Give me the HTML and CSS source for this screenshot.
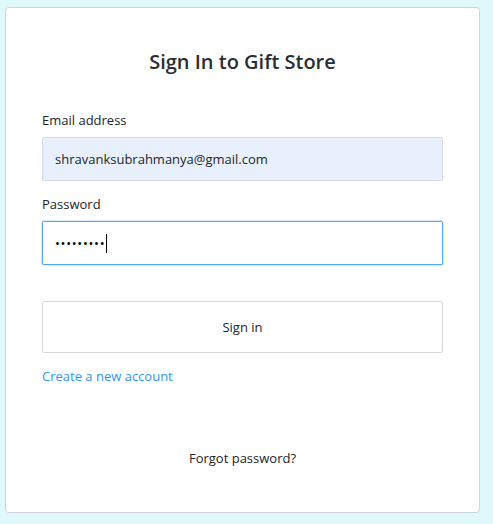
FILE: index.html
```html
<!DOCTYPE html>
<html lang="en">
<head>
<meta charset="utf-8">
<title>Sign In to Gift Store</title>
<link rel="stylesheet" href="styles.css">
</head>
<body>
<main class="card">
  <h1 class="title">Sign In to Gift Store</h1>
  <form class="form">
    <label class="label" for="email">Email address</label>
    <input class="field field-filled" id="email" type="email" value="shravanksubrahmanya@gmail.com">
    <label class="label label-pass">Password</label>
    <div class="field field-focus" role="textbox"><span class="dots">•••••••••</span><span class="caret"></span></div>
    <button class="btn" type="button">Sign in</button>
  </form>
  <a class="link" href="#">Create a new account</a>
  <a class="forgot" href="#">Forgot password?</a>
</main>
</body>
</html>
```
FILE: styles.css
```css
html, body {
  margin: 0;
  padding: 0;
}
body {
  background: #dff9fb;
  padding: 7px 14px 11px 5px;
  font-family: "Open Sans", "Noto Sans", sans-serif;
  color: #212529;
  font-size: 13px;
}
.card {
  box-sizing: border-box;
  width: 475px;
  height: 506px;
  background: #fff;
  border: 1px solid #cfd4d8;
  border-radius: 4px;
  padding: 40px 36px 0 36px;
  display: flex;
  flex-direction: column;
}
.title {
  margin: 0;
  font-size: 20px;
  line-height: 28px;
  font-weight: 600;
  text-align: center;
  color: #2a2e33;
}
.form {
  display: flex;
  flex-direction: column;
  margin: 34px 0 0 0;
}
.label {
  line-height: 20px;
  font-size: 13px;
}
.label-pass {
  margin-top: 13px;
}
.field {
  box-sizing: border-box;
  width: 401px;
  height: 44px;
  margin-top: 7px;
  border: 1px solid #ced4da;
  border-radius: 2px;
  padding: 0 12px;
  font-family: inherit;
  font-size: 13px;
  color: #212529;
  background: #fff;
  display: flex;
  align-items: center;
  outline: none;
}
.field-filled {
  background: #e8f0fe;
  border-color: #d6dbe0;
}
.field-focus {
  border-color: #4dabf7;
  box-shadow: 0 0 0 1px rgba(77, 171, 247, 0.25);
}
.dots {
  letter-spacing: 0.7px;
  font-size: 13px;
  color: #000;
}
.caret {
  display: inline-block;
  width: 1px;
  height: 19px;
  background: #000;
  margin-left: 1px;
}
.btn {
  box-sizing: border-box;
  width: 401px;
  height: 52px;
  margin-top: 36px;
  background: #fff;
  border: 1px solid #d6d9dc;
  border-radius: 2px;
  font-family: inherit;
  font-size: 13px;
  color: #212529;
  cursor: pointer;
}
.link {
  margin-top: 13px;
  line-height: 20px;
  color: #2f95f5;
  text-decoration: none;
  align-self: flex-start;
}
.forgot {
  margin-top: 62px;
  line-height: 20px;
  color: #212529;
  text-decoration: none;
  align-self: center;
}
```
